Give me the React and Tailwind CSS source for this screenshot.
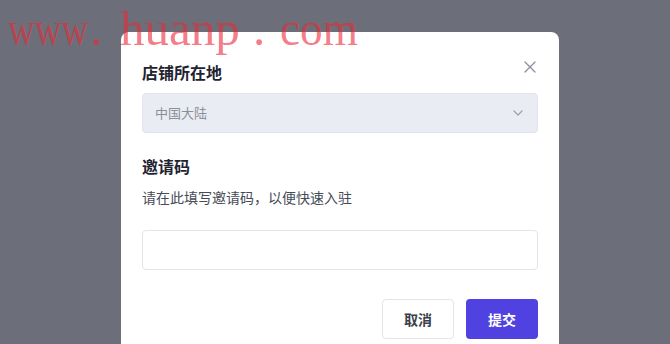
import React from "react";

export default function App() {
  return (
    <div
      className="relative w-[670px] h-[344px] overflow-hidden bg-[#6c6f79]"
      style={{ fontFamily: '"Noto Sans CJK SC", "Noto Sans", sans-serif' }}
    >
      <div className="pl-[121px] pt-[32px]">
        <div className="w-[438px] h-[330px] bg-white rounded-t-[8px] px-[21px] pt-[28px]">
          <div className="flex items-center justify-between h-[24px]">
            <div className="text-[16px] font-bold text-[#1f2330] leading-[24px]">店铺所在地</div>
            <svg width="14" height="14" viewBox="0 0 14 14" className="mr-[1px] -mt-[10px]">
              <path d="M2 2 L12 12 M12 2 L2 12" stroke="#8a8f9c" strokeWidth="1.3" strokeLinecap="round" />
            </svg>
          </div>
          <div className="mt-[9px] h-[40px] rounded-[4px] bg-[#eaecf4] border border-[#e1e4ed] flex items-center justify-between pl-[12px] pr-[14px]">
            <span className="text-[13px] text-[#8b8f99]">中国大陆</span>
            <svg width="10" height="6" viewBox="0 0 10 6">
              <path d="M1 1 L5 5 L9 1" fill="none" stroke="#9ca0aa" strokeWidth="1.2" strokeLinecap="round" strokeLinejoin="round" />
            </svg>
          </div>
          <div className="mt-[21px] text-[16px] font-bold text-[#1f2330] leading-[24px]">邀请码</div>
          <div className="mt-[8px] text-[14px] text-[#464b57] leading-[22px]">请在此填写邀请码，以便快速入驻</div>
          <div className="mt-[22px] h-[40px] rounded-[4px] border border-[#e3e5ec] bg-white"></div>
          <div className="mt-[29px] flex justify-end gap-[12px]">
            <button className="w-[72px] h-[40px] rounded-[4px] border border-[#e3e5ec] bg-white text-[14px] font-semibold text-[#3a3f4b]">
              取消
            </button>
            <button className="w-[72px] h-[40px] rounded-[4px] bg-[#4f42e0] text-[14px] font-semibold text-white">
              提交
            </button>
          </div>
        </div>
      </div>
      <div
        className="absolute left-[8px] top-[4px] flex text-[49px] leading-none whitespace-pre text-[rgba(235,40,55,0.6)]"
        style={{ fontFamily: '"Liberation Serif", serif' }}
      >
        <span className="inline-block w-[82px]">
          <span className="inline-block origin-left scale-x-[0.755]">www</span>
        </span>
        <span className="inline-block w-[30px]">.</span>
        <span className="inline-block w-[133px]">huanp</span>
        <span className="inline-block w-[27px]">.</span>
        <span className="inline-block">
          <span className="inline-block origin-left scale-x-[0.925]">com</span>
        </span>
      </div>
    </div>
  );
}
